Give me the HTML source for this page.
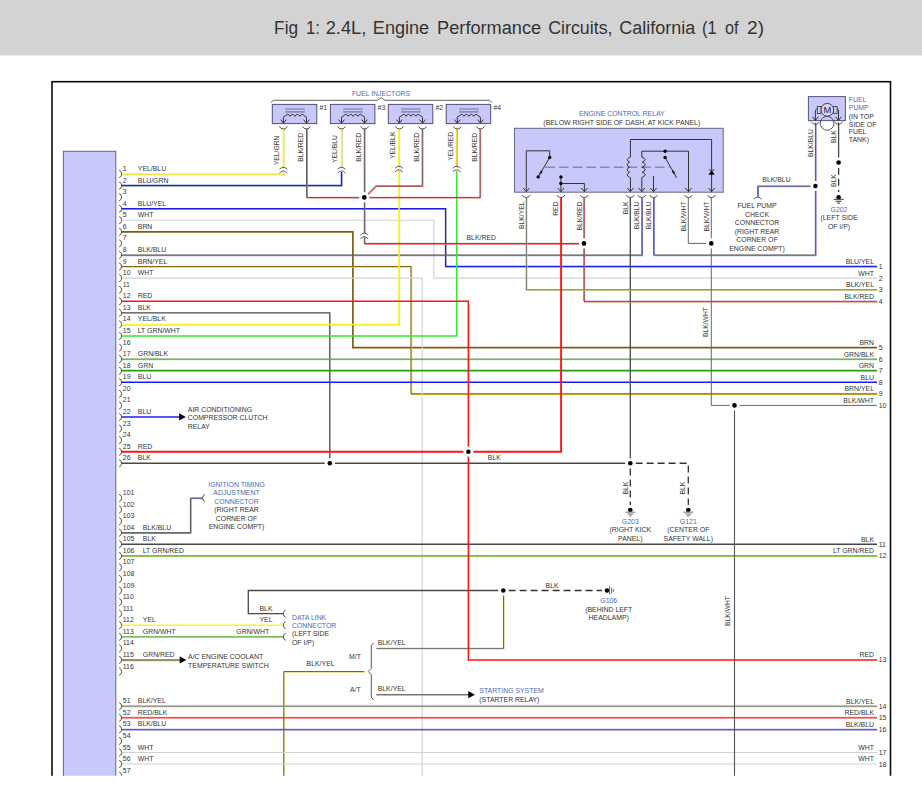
<!DOCTYPE html>
<html><head><meta charset="utf-8"><title>Fig 1</title>
<style>
html,body{margin:0;padding:0;background:#fff;}
body{width:922px;height:797px;overflow:hidden;font-family:"Liberation Sans",sans-serif;}
svg{display:block;}
svg text{font-family:"Liberation Sans",sans-serif;}
</style></head><body>
<svg width="922" height="797" viewBox="0 0 922 797">
<rect x="0" y="0" width="922" height="797" fill="#fff"/>
<rect x="0" y="0" width="922" height="55.4" fill="#d3d3d3"/>
<g font-size="19.2" fill="#333"><text x="274.1" y="33.9" textLength="24.0" lengthAdjust="spacingAndGlyphs">Fig</text><text x="306.0" y="33.9" textLength="14.0" lengthAdjust="spacingAndGlyphs">1:</text><text x="325.7" y="33.9" textLength="40.6" lengthAdjust="spacingAndGlyphs">2.4L,</text><text x="372.8" y="33.9" textLength="56.4" lengthAdjust="spacingAndGlyphs">Engine</text><text x="437.1" y="33.9" textLength="104.1" lengthAdjust="spacingAndGlyphs">Performance</text><text x="548.2" y="33.9" textLength="64.3" lengthAdjust="spacingAndGlyphs">Circuits,</text><text x="619.3" y="33.9" textLength="76.1" lengthAdjust="spacingAndGlyphs">California</text><text x="701.9" y="33.9" textLength="14.7" lengthAdjust="spacingAndGlyphs">(1</text><text x="725.0" y="33.9" textLength="13.6" lengthAdjust="spacingAndGlyphs">of</text><text x="747.0" y="33.9" textLength="17.0" lengthAdjust="spacingAndGlyphs">2)</text></g>
<g>
<polyline points="121.30,174.00 283.40,174.00 283.40,172.00" fill="none" stroke="#8a8ab0" stroke-width="0.90" stroke-opacity="0.70" transform="translate(0.70,0.70)"/>
<polyline points="121.30,174.00 283.40,174.00 283.40,172.00" fill="none" stroke="#faf526" stroke-width="1.40"/>
<polyline points="283.40,168.00 283.40,128.50" fill="none" stroke="#9c9" stroke-width="0.90" stroke-opacity="0.80" transform="translate(0.70,0.70)"/>
<polyline points="283.40,168.00 283.40,128.50" fill="none" stroke="#faf526" stroke-width="1.60"/>
<polyline points="121.30,185.57 341.50,185.57 341.50,172.00" fill="none" stroke="#9c6" stroke-width="0.90" stroke-opacity="0.70" transform="translate(0.70,0.70)"/>
<polyline points="121.30,185.57 341.50,185.57 341.50,172.00" fill="none" stroke="#1a1cf6" stroke-width="1.50"/>
<polyline points="341.50,168.00 341.50,128.50" fill="none" stroke="#99c" stroke-width="0.90" stroke-opacity="0.80" transform="translate(0.70,0.70)"/>
<polyline points="341.50,168.00 341.50,128.50" fill="none" stroke="#faf526" stroke-width="1.60"/>
<polyline points="121.30,208.71 445.60,208.71 445.60,266.56 877.00,266.56" fill="none" stroke="#e6dc6a" stroke-width="0.90" stroke-opacity="0.80" transform="translate(0.70,0.70)"/>
<polyline points="121.30,208.71 445.60,208.71 445.60,266.56 877.00,266.56" fill="none" stroke="#1a1cf6" stroke-width="1.40"/>
<polyline points="121.30,220.28 433.90,220.28 433.90,278.13 877.00,278.13" fill="none" stroke="#d2d2d2" stroke-width="1.10"/>
<polyline points="121.30,231.85 352.90,231.85 352.90,347.55 877.00,347.55" fill="none" stroke="#7d5e10" stroke-width="1.70"/>
<polyline points="121.30,254.99 641.80,254.99 641.80,197.50" fill="none" stroke="#7474ee" stroke-width="1.00" stroke-opacity="1.00" transform="translate(0.70,0.70)"/>
<polyline points="121.30,254.99 641.80,254.99 641.80,197.50" fill="none" stroke="#555" stroke-width="1.00"/>
<polyline points="121.30,266.56 411.00,266.56 411.00,393.83 877.00,393.83" fill="none" stroke="#eeda35" stroke-width="1.00" stroke-opacity="1.00" transform="translate(0.70,0.70)"/>
<polyline points="121.30,266.56 411.00,266.56 411.00,393.83 877.00,393.83" fill="none" stroke="#86660f" stroke-width="1.10"/>
<polyline points="121.30,278.13 422.20,278.13 422.20,780.00" fill="none" stroke="#d2d2d2" stroke-width="1.10"/>
<polyline points="121.30,312.84 329.80,312.84 329.80,463.25" fill="none" stroke="#484848" stroke-width="1.30"/>
<polyline points="121.30,324.41 398.90,324.41 398.90,171.00" fill="none" stroke="#aa9" stroke-width="0.90" stroke-opacity="0.60" transform="translate(0.70,0.70)"/>
<polyline points="121.30,324.41 398.90,324.41 398.90,171.00" fill="none" stroke="#faf526" stroke-width="1.50"/>
<polyline points="398.90,167.00 398.90,128.50" fill="none" stroke="#aa9" stroke-width="0.90" stroke-opacity="0.60" transform="translate(0.70,0.70)"/>
<polyline points="398.90,167.00 398.90,128.50" fill="none" stroke="#faf526" stroke-width="1.60"/>
<polyline points="121.30,335.98 456.70,335.98 456.70,171.00" fill="none" stroke="#30ea30" stroke-width="1.40"/>
<polyline points="456.70,167.00 456.70,128.50" fill="none" stroke="#f60" stroke-width="0.80" stroke-opacity="0.90" transform="translate(0.70,0.70)"/>
<polyline points="456.70,167.00 456.70,128.50" fill="none" stroke="#f6d42a" stroke-width="1.50"/>
<polyline points="121.30,359.12 877.00,359.12" fill="none" stroke="#8a8" stroke-width="0.90" stroke-opacity="0.50" transform="translate(0.70,0.70)"/>
<polyline points="121.30,359.12 877.00,359.12" fill="none" stroke="#4aaa34" stroke-width="1.30"/>
<polyline points="121.30,370.69 877.00,370.69" fill="none" stroke="#24a012" stroke-width="1.70"/>
<polyline points="121.30,382.26 877.00,382.26" fill="none" stroke="#1a1cf6" stroke-width="1.50"/>
<polyline points="121.30,416.97 180.00,416.97" fill="none" stroke="#1a1cf6" stroke-width="1.60"/>
<polyline points="121.30,463.25 630.30,463.25" fill="none" stroke="#484848" stroke-width="1.30"/>
<polyline points="630.30,197.50 630.30,463.25" fill="none" stroke="#484848" stroke-width="1.30"/>
<polyline points="635.60,463.25 688.30,463.25 688.30,506.00" fill="none" stroke="#333" stroke-width="1.30" stroke-dasharray="7 4"/>
<polyline points="630.30,468.55 630.30,506.00" fill="none" stroke="#333" stroke-width="1.30" stroke-dasharray="7 4"/>
<polyline points="121.30,532.67 190.40,532.67 190.40,497.96 202.30,497.96" fill="none" stroke="#7474ee" stroke-width="1.00" stroke-opacity="1.00" transform="translate(0.70,0.70)"/>
<polyline points="121.30,532.67 190.40,532.67 190.40,497.96 202.30,497.96" fill="none" stroke="#555" stroke-width="1.00"/>
<polyline points="121.30,544.24 877.00,544.24" fill="none" stroke="#484848" stroke-width="1.30"/>
<polyline points="121.30,555.81 877.00,555.81" fill="none" stroke="#e98a3a" stroke-width="0.80" stroke-opacity="0.90" transform="translate(0.70,0.70)"/>
<polyline points="121.30,555.81 877.00,555.81" fill="none" stroke="#3ee03e" stroke-width="1.40"/>
<polyline points="121.30,625.23 283.30,625.23" fill="none" stroke="#faf526" stroke-width="1.50"/>
<polyline points="121.30,636.80 283.30,636.80" fill="none" stroke="#44aa2a" stroke-width="1.30"/>
<polyline points="121.30,659.94 180.00,659.94" fill="none" stroke="#a55" stroke-width="0.80" stroke-opacity="1.00" transform="translate(0.70,0.70)"/>
<polyline points="121.30,659.94 180.00,659.94" fill="none" stroke="#5f8a2a" stroke-width="1.30"/>
<polyline points="283.30,613.66 248.30,613.66 248.30,590.52 503.30,590.52" fill="none" stroke="#484848" stroke-width="1.30"/>
<polyline points="508.60,590.52 603.00,590.52" fill="none" stroke="#333" stroke-width="1.30" stroke-dasharray="7 4"/>
<polyline points="503.50,590.52 503.50,648.37 376.20,648.37" fill="none" stroke="#d8d060" stroke-width="0.90" stroke-opacity="1.00" transform="translate(0.70,0.70)"/>
<polyline points="503.50,590.52 503.50,648.37 376.20,648.37" fill="none" stroke="#666" stroke-width="1.00"/>
<polyline points="364.30,671.51 283.70,671.51 283.70,780.00" fill="none" stroke="#d8d060" stroke-width="0.90" stroke-opacity="1.00" transform="translate(0.70,0.70)"/>
<polyline points="364.30,671.51 283.70,671.51 283.70,780.00" fill="none" stroke="#666" stroke-width="1.00"/>
<polyline points="376.20,694.70 469.00,694.70" fill="none" stroke="#d8d060" stroke-width="0.90" stroke-opacity="1.00" transform="translate(0.70,0.70)"/>
<polyline points="376.20,694.70 469.00,694.70" fill="none" stroke="#555" stroke-width="1.00"/>
<polyline points="121.30,706.22 877.00,706.22" fill="none" stroke="#dcd870" stroke-width="1.00" stroke-opacity="1.00" transform="translate(0.70,0.70)"/>
<polyline points="121.30,706.22 877.00,706.22" fill="none" stroke="#808072" stroke-width="1.20"/>
<polyline points="121.30,717.79 877.00,717.79" fill="none" stroke="#855" stroke-width="0.60" stroke-opacity="0.60" transform="translate(0.00,-0.60)"/>
<polyline points="121.30,717.79 877.00,717.79" fill="none" stroke="#ff1c1c" stroke-width="1.25"/>
<polyline points="121.30,729.36 877.00,729.36" fill="none" stroke="#7474ee" stroke-width="1.00" stroke-opacity="1.00" transform="translate(0.70,0.70)"/>
<polyline points="121.30,729.36 877.00,729.36" fill="none" stroke="#555" stroke-width="1.00"/>
<polyline points="121.30,752.50 877.00,752.50" fill="none" stroke="#d2d2d2" stroke-width="1.10"/>
<polyline points="121.30,764.07 877.00,764.07" fill="none" stroke="#d2d2d2" stroke-width="1.10"/>
<polyline points="306.60,128.50 306.60,197.40 364.30,197.40" fill="none" stroke="#ee6464" stroke-width="1.05" stroke-opacity="1.00" transform="translate(0.70,0.70)"/>
<polyline points="306.60,128.50 306.60,197.40 364.30,197.40" fill="none" stroke="#555" stroke-width="1.00"/>
<polyline points="364.30,128.50 364.30,233.00" fill="none" stroke="#ee6464" stroke-width="1.05" stroke-opacity="1.00" transform="translate(0.70,0.70)"/>
<polyline points="364.30,128.50 364.30,233.00" fill="none" stroke="#555" stroke-width="1.00"/>
<polyline points="364.30,237.00 364.30,243.42 584.00,243.42" fill="none" stroke="#ee6464" stroke-width="1.05" stroke-opacity="1.00" transform="translate(0.70,0.70)"/>
<polyline points="364.30,237.00 364.30,243.42 584.00,243.42" fill="none" stroke="#555" stroke-width="1.00"/>
<polyline points="422.20,128.50 422.20,185.90 375.60,185.90 364.30,197.40" fill="none" stroke="#ee6464" stroke-width="1.05" stroke-opacity="1.00" transform="translate(0.70,0.70)"/>
<polyline points="422.20,128.50 422.20,185.90 375.60,185.90 364.30,197.40" fill="none" stroke="#555" stroke-width="1.00"/>
<polyline points="480.00,128.50 480.00,197.40 364.30,197.40" fill="none" stroke="#ee6464" stroke-width="1.05" stroke-opacity="1.00" transform="translate(0.70,0.70)"/>
<polyline points="480.00,128.50 480.00,197.40 364.30,197.40" fill="none" stroke="#555" stroke-width="1.00"/>
<polyline points="583.90,197.50 583.90,301.27 877.00,301.27" fill="none" stroke="#ee6464" stroke-width="1.05" stroke-opacity="1.00" transform="translate(0.70,0.70)"/>
<polyline points="583.90,197.50 583.90,301.27 877.00,301.27" fill="none" stroke="#555" stroke-width="1.00"/>
<polyline points="526.30,197.50 526.30,289.70 877.00,289.70" fill="none" stroke="#dcd868" stroke-width="0.90" stroke-opacity="1.00" transform="translate(0.70,0.70)"/>
<polyline points="526.30,197.50 526.30,289.70 877.00,289.70" fill="none" stroke="#74746a" stroke-width="1.10"/>
<polyline points="688.30,197.50 688.30,243.42 711.30,243.42" fill="none" stroke="#666" stroke-width="1.00"/>
<polyline points="711.30,197.50 711.30,405.40 877.00,405.40" fill="none" stroke="#666" stroke-width="1.00"/>
<polyline points="734.50,405.40 734.50,780.00" fill="none" stroke="#555" stroke-width="1.10"/>
<polyline points="653.60,197.50 653.60,254.99 815.40,254.99 815.40,122.60" fill="none" stroke="#7474ee" stroke-width="1.00" stroke-opacity="1.00" transform="translate(0.70,0.70)"/>
<polyline points="653.60,197.50 653.60,254.99 815.40,254.99 815.40,122.60" fill="none" stroke="#555" stroke-width="1.00"/>
<polyline points="815.40,186.00 757.70,186.00 757.70,196.60" fill="none" stroke="#7474ee" stroke-width="1.00" stroke-opacity="1.00" transform="translate(0.70,0.70)"/>
<polyline points="815.40,186.00 757.70,186.00 757.70,196.60" fill="none" stroke="#555" stroke-width="1.00"/>
<polyline points="838.60,122.60 838.60,162.50" fill="none" stroke="#484848" stroke-width="1.30"/>
<polyline points="838.60,167.80 838.60,193.00" fill="none" stroke="#333" stroke-width="1.30" stroke-dasharray="7 4"/>
<polyline points="121.30,301.27 468.40,301.27 468.40,659.94 877.00,659.94" fill="none" stroke="#ff1414" stroke-width="1.60"/>
<polyline points="121.30,451.68 561.10,451.68 561.10,197.50" fill="none" stroke="#ff1414" stroke-width="1.90"/>
<circle cx="364.30" cy="197.40" r="5.10" fill="#fff"/>
<circle cx="364.30" cy="197.40" r="2.30" fill="#000"/>
<circle cx="584.00" cy="243.42" r="5.10" fill="#fff"/>
<circle cx="584.00" cy="243.42" r="2.30" fill="#000"/>
<circle cx="711.30" cy="243.42" r="5.10" fill="#fff"/>
<circle cx="711.30" cy="243.42" r="2.30" fill="#000"/>
<circle cx="734.50" cy="405.40" r="5.10" fill="#fff"/>
<circle cx="734.50" cy="405.40" r="2.30" fill="#000"/>
<circle cx="815.40" cy="186.00" r="5.10" fill="#fff"/>
<circle cx="815.40" cy="186.00" r="2.30" fill="#000"/>
<circle cx="838.60" cy="162.50" r="5.10" fill="#fff"/>
<circle cx="838.60" cy="162.50" r="2.30" fill="#000"/>
<circle cx="838.60" cy="197.20" r="5.10" fill="#fff"/>
<circle cx="838.60" cy="197.20" r="2.30" fill="#000"/>
<circle cx="329.80" cy="463.25" r="5.10" fill="#fff"/>
<circle cx="329.80" cy="463.25" r="2.30" fill="#000"/>
<circle cx="468.40" cy="451.68" r="5.10" fill="#fff"/>
<circle cx="468.40" cy="451.68" r="2.30" fill="#000"/>
<circle cx="630.30" cy="463.25" r="5.10" fill="#fff"/>
<circle cx="630.30" cy="463.25" r="2.30" fill="#000"/>
<circle cx="630.30" cy="510.00" r="5.10" fill="#fff"/>
<circle cx="630.30" cy="510.00" r="2.30" fill="#000"/>
<circle cx="688.30" cy="510.00" r="5.10" fill="#fff"/>
<circle cx="688.30" cy="510.00" r="2.30" fill="#000"/>
<circle cx="503.30" cy="590.52" r="5.10" fill="#fff"/>
<circle cx="503.30" cy="590.52" r="2.30" fill="#000"/>
<circle cx="607.00" cy="590.52" r="5.10" fill="#fff"/>
<circle cx="607.00" cy="590.52" r="2.30" fill="#000"/>
<polygon points="185.80,416.97 179.20,413.37 179.20,420.57" fill="#000"/>
<polygon points="186.30,659.94 179.70,656.34 179.70,663.54" fill="#000"/>
<polygon points="474.90,694.70 468.30,691.10 468.30,698.30" fill="#000"/>
<line x1="833.60" y1="199.40" x2="843.60" y2="199.40" stroke="#5a5a5a" stroke-width="1.25"/>
<line x1="835.70" y1="201.30" x2="841.50" y2="201.30" stroke="#5a5a5a" stroke-width="1.25"/>
<line x1="837.20" y1="203.10" x2="840.00" y2="203.10" stroke="#5a5a5a" stroke-width="1.25"/>
<line x1="625.30" y1="512.20" x2="635.30" y2="512.20" stroke="#8c8c8c" stroke-width="1.25"/>
<line x1="627.40" y1="514.10" x2="633.20" y2="514.10" stroke="#8c8c8c" stroke-width="1.25"/>
<line x1="628.90" y1="515.90" x2="631.70" y2="515.90" stroke="#8c8c8c" stroke-width="1.25"/>
<line x1="683.30" y1="512.20" x2="693.30" y2="512.20" stroke="#8c8c8c" stroke-width="1.25"/>
<line x1="685.40" y1="514.10" x2="691.20" y2="514.10" stroke="#8c8c8c" stroke-width="1.25"/>
<line x1="686.90" y1="515.90" x2="689.70" y2="515.90" stroke="#8c8c8c" stroke-width="1.25"/>
<line x1="609.60" y1="586.32" x2="609.60" y2="594.72" stroke="#666" stroke-width="1"/>
<line x1="611.60" y1="587.72" x2="611.60" y2="593.32" stroke="#666" stroke-width="1"/>
<line x1="613.40" y1="589.22" x2="613.40" y2="591.82" stroke="#666" stroke-width="1"/>
<rect x="63.4" y="151.3" width="52.4" height="640" fill="#c8c8fa" stroke="#666680" stroke-width="1"/>
<path d="M119.1,170.30 A3.95,3.95 0 0 1 119.1,177.70" fill="none" stroke="#444" stroke-width="0.9"/>
<text x="122.80" y="171.00" text-anchor="start" fill="#333" font-size="6.9">1</text>
<text x="137.80" y="171.00" text-anchor="start" fill="#333" font-size="6.9">YEL/BLU</text>
<path d="M119.1,181.87 A3.95,3.95 0 0 1 119.1,189.27" fill="none" stroke="#444" stroke-width="0.9"/>
<text x="122.80" y="182.57" text-anchor="start" fill="#333" font-size="6.9">2</text>
<text x="137.80" y="182.57" text-anchor="start" fill="#333" font-size="6.9">BLU/GRN</text>
<path d="M119.1,193.44 A3.95,3.95 0 0 1 119.1,200.84" fill="none" stroke="#444" stroke-width="0.9"/>
<text x="122.80" y="194.14" text-anchor="start" fill="#333" font-size="6.9">3</text>
<path d="M119.1,205.01 A3.95,3.95 0 0 1 119.1,212.41" fill="none" stroke="#444" stroke-width="0.9"/>
<text x="122.80" y="205.71" text-anchor="start" fill="#333" font-size="6.9">4</text>
<text x="137.80" y="205.71" text-anchor="start" fill="#333" font-size="6.9">BLU/YEL</text>
<path d="M119.1,216.58 A3.95,3.95 0 0 1 119.1,223.98" fill="none" stroke="#444" stroke-width="0.9"/>
<text x="122.80" y="217.28" text-anchor="start" fill="#333" font-size="6.9">5</text>
<text x="137.80" y="217.28" text-anchor="start" fill="#333" font-size="6.9">WHT</text>
<path d="M119.1,228.15 A3.95,3.95 0 0 1 119.1,235.55" fill="none" stroke="#444" stroke-width="0.9"/>
<text x="122.80" y="228.85" text-anchor="start" fill="#333" font-size="6.9">6</text>
<text x="137.80" y="228.85" text-anchor="start" fill="#333" font-size="6.9">BRN</text>
<path d="M119.1,239.72 A3.95,3.95 0 0 1 119.1,247.12" fill="none" stroke="#444" stroke-width="0.9"/>
<text x="122.80" y="240.42" text-anchor="start" fill="#333" font-size="6.9">7</text>
<path d="M119.1,251.29 A3.95,3.95 0 0 1 119.1,258.69" fill="none" stroke="#444" stroke-width="0.9"/>
<text x="122.80" y="251.99" text-anchor="start" fill="#333" font-size="6.9">8</text>
<text x="137.80" y="251.99" text-anchor="start" fill="#333" font-size="6.9">BLK/BLU</text>
<path d="M119.1,262.86 A3.95,3.95 0 0 1 119.1,270.26" fill="none" stroke="#444" stroke-width="0.9"/>
<text x="122.80" y="263.56" text-anchor="start" fill="#333" font-size="6.9">9</text>
<text x="137.80" y="263.56" text-anchor="start" fill="#333" font-size="6.9">BRN/YEL</text>
<path d="M119.1,274.43 A3.95,3.95 0 0 1 119.1,281.83" fill="none" stroke="#444" stroke-width="0.9"/>
<text x="122.80" y="275.13" text-anchor="start" fill="#333" font-size="6.9">10</text>
<text x="137.80" y="275.13" text-anchor="start" fill="#333" font-size="6.9">WHT</text>
<path d="M119.1,286.00 A3.95,3.95 0 0 1 119.1,293.40" fill="none" stroke="#444" stroke-width="0.9"/>
<text x="122.80" y="286.70" text-anchor="start" fill="#333" font-size="6.9">11</text>
<path d="M119.1,297.57 A3.95,3.95 0 0 1 119.1,304.97" fill="none" stroke="#444" stroke-width="0.9"/>
<text x="122.80" y="298.27" text-anchor="start" fill="#333" font-size="6.9">12</text>
<text x="137.80" y="298.27" text-anchor="start" fill="#333" font-size="6.9">RED</text>
<path d="M119.1,309.14 A3.95,3.95 0 0 1 119.1,316.54" fill="none" stroke="#444" stroke-width="0.9"/>
<text x="122.80" y="309.84" text-anchor="start" fill="#333" font-size="6.9">13</text>
<text x="137.80" y="309.84" text-anchor="start" fill="#333" font-size="6.9">BLK</text>
<path d="M119.1,320.71 A3.95,3.95 0 0 1 119.1,328.11" fill="none" stroke="#444" stroke-width="0.9"/>
<text x="122.80" y="321.41" text-anchor="start" fill="#333" font-size="6.9">14</text>
<text x="137.80" y="321.41" text-anchor="start" fill="#333" font-size="6.9">YEL/BLK</text>
<path d="M119.1,332.28 A3.95,3.95 0 0 1 119.1,339.68" fill="none" stroke="#444" stroke-width="0.9"/>
<text x="122.80" y="332.98" text-anchor="start" fill="#333" font-size="6.9">15</text>
<text x="137.80" y="332.98" text-anchor="start" fill="#333" font-size="6.9">LT GRN/WHT</text>
<path d="M119.1,343.85 A3.95,3.95 0 0 1 119.1,351.25" fill="none" stroke="#444" stroke-width="0.9"/>
<text x="122.80" y="344.55" text-anchor="start" fill="#333" font-size="6.9">16</text>
<path d="M119.1,355.42 A3.95,3.95 0 0 1 119.1,362.82" fill="none" stroke="#444" stroke-width="0.9"/>
<text x="122.80" y="356.12" text-anchor="start" fill="#333" font-size="6.9">17</text>
<text x="137.80" y="356.12" text-anchor="start" fill="#333" font-size="6.9">GRN/BLK</text>
<path d="M119.1,366.99 A3.95,3.95 0 0 1 119.1,374.39" fill="none" stroke="#444" stroke-width="0.9"/>
<text x="122.80" y="367.69" text-anchor="start" fill="#333" font-size="6.9">18</text>
<text x="137.80" y="367.69" text-anchor="start" fill="#333" font-size="6.9">GRN</text>
<path d="M119.1,378.56 A3.95,3.95 0 0 1 119.1,385.96" fill="none" stroke="#444" stroke-width="0.9"/>
<text x="122.80" y="379.26" text-anchor="start" fill="#333" font-size="6.9">19</text>
<text x="137.80" y="379.26" text-anchor="start" fill="#333" font-size="6.9">BLU</text>
<path d="M119.1,390.13 A3.95,3.95 0 0 1 119.1,397.53" fill="none" stroke="#444" stroke-width="0.9"/>
<text x="122.80" y="390.83" text-anchor="start" fill="#333" font-size="6.9">20</text>
<path d="M119.1,401.70 A3.95,3.95 0 0 1 119.1,409.10" fill="none" stroke="#444" stroke-width="0.9"/>
<text x="122.80" y="402.40" text-anchor="start" fill="#333" font-size="6.9">21</text>
<path d="M119.1,413.27 A3.95,3.95 0 0 1 119.1,420.67" fill="none" stroke="#444" stroke-width="0.9"/>
<text x="122.80" y="413.97" text-anchor="start" fill="#333" font-size="6.9">22</text>
<text x="137.80" y="413.97" text-anchor="start" fill="#333" font-size="6.9">BLU</text>
<path d="M119.1,424.84 A3.95,3.95 0 0 1 119.1,432.24" fill="none" stroke="#444" stroke-width="0.9"/>
<text x="122.80" y="425.54" text-anchor="start" fill="#333" font-size="6.9">23</text>
<path d="M119.1,436.41 A3.95,3.95 0 0 1 119.1,443.81" fill="none" stroke="#444" stroke-width="0.9"/>
<text x="122.80" y="437.11" text-anchor="start" fill="#333" font-size="6.9">24</text>
<path d="M119.1,447.98 A3.95,3.95 0 0 1 119.1,455.38" fill="none" stroke="#444" stroke-width="0.9"/>
<text x="122.80" y="448.68" text-anchor="start" fill="#333" font-size="6.9">25</text>
<text x="137.80" y="448.68" text-anchor="start" fill="#333" font-size="6.9">RED</text>
<path d="M119.1,459.55 A3.95,3.95 0 0 1 119.1,466.95" fill="none" stroke="#444" stroke-width="0.9"/>
<text x="122.80" y="460.25" text-anchor="start" fill="#333" font-size="6.9">26</text>
<text x="137.80" y="460.25" text-anchor="start" fill="#333" font-size="6.9">BLK</text>
<path d="M119.1,494.26 A3.95,3.95 0 0 1 119.1,501.66" fill="none" stroke="#444" stroke-width="0.9"/>
<text x="122.80" y="494.96" text-anchor="start" fill="#333" font-size="6.9">101</text>
<path d="M119.1,505.83 A3.95,3.95 0 0 1 119.1,513.23" fill="none" stroke="#444" stroke-width="0.9"/>
<text x="122.80" y="506.53" text-anchor="start" fill="#333" font-size="6.9">102</text>
<path d="M119.1,517.40 A3.95,3.95 0 0 1 119.1,524.80" fill="none" stroke="#444" stroke-width="0.9"/>
<text x="122.80" y="518.10" text-anchor="start" fill="#333" font-size="6.9">103</text>
<path d="M119.1,528.97 A3.95,3.95 0 0 1 119.1,536.37" fill="none" stroke="#444" stroke-width="0.9"/>
<text x="122.80" y="529.67" text-anchor="start" fill="#333" font-size="6.9">104</text>
<text x="142.80" y="529.67" text-anchor="start" fill="#333" font-size="6.9">BLK/BLU</text>
<path d="M119.1,540.54 A3.95,3.95 0 0 1 119.1,547.94" fill="none" stroke="#444" stroke-width="0.9"/>
<text x="122.80" y="541.24" text-anchor="start" fill="#333" font-size="6.9">105</text>
<text x="142.80" y="541.24" text-anchor="start" fill="#333" font-size="6.9">BLK</text>
<path d="M119.1,552.11 A3.95,3.95 0 0 1 119.1,559.51" fill="none" stroke="#444" stroke-width="0.9"/>
<text x="122.80" y="552.81" text-anchor="start" fill="#333" font-size="6.9">106</text>
<text x="142.80" y="552.81" text-anchor="start" fill="#333" font-size="6.9">LT GRN/RED</text>
<path d="M119.1,563.68 A3.95,3.95 0 0 1 119.1,571.08" fill="none" stroke="#444" stroke-width="0.9"/>
<text x="122.80" y="564.38" text-anchor="start" fill="#333" font-size="6.9">107</text>
<path d="M119.1,575.25 A3.95,3.95 0 0 1 119.1,582.65" fill="none" stroke="#444" stroke-width="0.9"/>
<text x="122.80" y="575.95" text-anchor="start" fill="#333" font-size="6.9">108</text>
<path d="M119.1,586.82 A3.95,3.95 0 0 1 119.1,594.22" fill="none" stroke="#444" stroke-width="0.9"/>
<text x="122.80" y="587.52" text-anchor="start" fill="#333" font-size="6.9">109</text>
<path d="M119.1,598.39 A3.95,3.95 0 0 1 119.1,605.79" fill="none" stroke="#444" stroke-width="0.9"/>
<text x="122.80" y="599.09" text-anchor="start" fill="#333" font-size="6.9">110</text>
<path d="M119.1,609.96 A3.95,3.95 0 0 1 119.1,617.36" fill="none" stroke="#444" stroke-width="0.9"/>
<text x="122.80" y="610.66" text-anchor="start" fill="#333" font-size="6.9">111</text>
<path d="M119.1,621.53 A3.95,3.95 0 0 1 119.1,628.93" fill="none" stroke="#444" stroke-width="0.9"/>
<text x="122.80" y="622.23" text-anchor="start" fill="#333" font-size="6.9">112</text>
<text x="142.80" y="622.23" text-anchor="start" fill="#333" font-size="6.9">YEL</text>
<path d="M119.1,633.10 A3.95,3.95 0 0 1 119.1,640.50" fill="none" stroke="#444" stroke-width="0.9"/>
<text x="122.80" y="633.80" text-anchor="start" fill="#333" font-size="6.9">113</text>
<text x="142.80" y="633.80" text-anchor="start" fill="#333" font-size="6.9">GRN/WHT</text>
<path d="M119.1,644.67 A3.95,3.95 0 0 1 119.1,652.07" fill="none" stroke="#444" stroke-width="0.9"/>
<text x="122.80" y="645.37" text-anchor="start" fill="#333" font-size="6.9">114</text>
<path d="M119.1,656.24 A3.95,3.95 0 0 1 119.1,663.64" fill="none" stroke="#444" stroke-width="0.9"/>
<text x="122.80" y="656.94" text-anchor="start" fill="#333" font-size="6.9">115</text>
<text x="142.80" y="656.94" text-anchor="start" fill="#333" font-size="6.9">GRN/RED</text>
<path d="M119.1,667.81 A3.95,3.95 0 0 1 119.1,675.21" fill="none" stroke="#444" stroke-width="0.9"/>
<text x="122.80" y="668.51" text-anchor="start" fill="#333" font-size="6.9">116</text>
<path d="M119.1,702.52 A3.95,3.95 0 0 1 119.1,709.92" fill="none" stroke="#444" stroke-width="0.9"/>
<text x="122.80" y="703.22" text-anchor="start" fill="#333" font-size="6.9">51</text>
<text x="137.80" y="703.22" text-anchor="start" fill="#333" font-size="6.9">BLK/YEL</text>
<path d="M119.1,714.09 A3.95,3.95 0 0 1 119.1,721.49" fill="none" stroke="#444" stroke-width="0.9"/>
<text x="122.80" y="714.79" text-anchor="start" fill="#333" font-size="6.9">52</text>
<text x="137.80" y="714.79" text-anchor="start" fill="#333" font-size="6.9">RED/BLK</text>
<path d="M119.1,725.66 A3.95,3.95 0 0 1 119.1,733.06" fill="none" stroke="#444" stroke-width="0.9"/>
<text x="122.80" y="726.36" text-anchor="start" fill="#333" font-size="6.9">53</text>
<text x="137.80" y="726.36" text-anchor="start" fill="#333" font-size="6.9">BLK/BLU</text>
<path d="M119.1,737.23 A3.95,3.95 0 0 1 119.1,744.63" fill="none" stroke="#444" stroke-width="0.9"/>
<text x="122.80" y="737.93" text-anchor="start" fill="#333" font-size="6.9">54</text>
<path d="M119.1,748.80 A3.95,3.95 0 0 1 119.1,756.20" fill="none" stroke="#444" stroke-width="0.9"/>
<text x="122.80" y="749.50" text-anchor="start" fill="#333" font-size="6.9">55</text>
<text x="137.80" y="749.50" text-anchor="start" fill="#333" font-size="6.9">WHT</text>
<path d="M119.1,760.37 A3.95,3.95 0 0 1 119.1,767.77" fill="none" stroke="#444" stroke-width="0.9"/>
<text x="122.80" y="761.07" text-anchor="start" fill="#333" font-size="6.9">56</text>
<text x="137.80" y="761.07" text-anchor="start" fill="#333" font-size="6.9">WHT</text>
<path d="M119.1,771.94 A3.95,3.95 0 0 1 119.1,779.34" fill="none" stroke="#444" stroke-width="0.9"/>
<text x="122.80" y="772.64" text-anchor="start" fill="#333" font-size="6.9">57</text>
<text x="874.00" y="263.96" text-anchor="end" fill="#333" font-size="6.9">BLU/YEL</text>
<text x="878.70" y="269.06" text-anchor="start" fill="#333" font-size="6.9">1</text>
<text x="874.00" y="275.53" text-anchor="end" fill="#333" font-size="6.9">WHT</text>
<text x="878.70" y="280.63" text-anchor="start" fill="#333" font-size="6.9">2</text>
<text x="874.00" y="287.10" text-anchor="end" fill="#333" font-size="6.9">BLK/YEL</text>
<text x="878.70" y="292.20" text-anchor="start" fill="#333" font-size="6.9">3</text>
<text x="874.00" y="298.67" text-anchor="end" fill="#333" font-size="6.9">BLK/RED</text>
<text x="878.70" y="303.77" text-anchor="start" fill="#333" font-size="6.9">4</text>
<text x="874.00" y="344.95" text-anchor="end" fill="#333" font-size="6.9">BRN</text>
<text x="878.70" y="350.05" text-anchor="start" fill="#333" font-size="6.9">5</text>
<text x="874.00" y="356.52" text-anchor="end" fill="#333" font-size="6.9">GRN/BLK</text>
<text x="878.70" y="361.62" text-anchor="start" fill="#333" font-size="6.9">6</text>
<text x="874.00" y="368.09" text-anchor="end" fill="#333" font-size="6.9">GRN</text>
<text x="878.70" y="373.19" text-anchor="start" fill="#333" font-size="6.9">7</text>
<text x="874.00" y="379.66" text-anchor="end" fill="#333" font-size="6.9">BLU</text>
<text x="878.70" y="384.76" text-anchor="start" fill="#333" font-size="6.9">8</text>
<text x="874.00" y="391.23" text-anchor="end" fill="#333" font-size="6.9">BRN/YEL</text>
<text x="878.70" y="396.33" text-anchor="start" fill="#333" font-size="6.9">9</text>
<text x="874.00" y="402.80" text-anchor="end" fill="#333" font-size="6.9">BLK/WHT</text>
<text x="878.70" y="407.90" text-anchor="start" fill="#333" font-size="6.9">10</text>
<text x="874.00" y="541.64" text-anchor="end" fill="#333" font-size="6.9">BLK</text>
<text x="878.70" y="546.74" text-anchor="start" fill="#333" font-size="6.9">11</text>
<text x="874.00" y="553.21" text-anchor="end" fill="#333" font-size="6.9">LT GRN/RED</text>
<text x="878.70" y="558.31" text-anchor="start" fill="#333" font-size="6.9">12</text>
<text x="874.00" y="657.34" text-anchor="end" fill="#333" font-size="6.9">RED</text>
<text x="878.70" y="662.44" text-anchor="start" fill="#333" font-size="6.9">13</text>
<text x="874.00" y="703.62" text-anchor="end" fill="#333" font-size="6.9">BLK/YEL</text>
<text x="878.70" y="708.72" text-anchor="start" fill="#333" font-size="6.9">14</text>
<text x="874.00" y="715.19" text-anchor="end" fill="#333" font-size="6.9">RED/BLK</text>
<text x="878.70" y="720.29" text-anchor="start" fill="#333" font-size="6.9">15</text>
<text x="874.00" y="726.76" text-anchor="end" fill="#333" font-size="6.9">BLK/BLU</text>
<text x="878.70" y="731.86" text-anchor="start" fill="#333" font-size="6.9">16</text>
<text x="874.00" y="749.90" text-anchor="end" fill="#333" font-size="6.9">WHT</text>
<text x="878.70" y="755.00" text-anchor="start" fill="#333" font-size="6.9">17</text>
<text x="874.00" y="761.47" text-anchor="end" fill="#333" font-size="6.9">WHT</text>
<text x="878.70" y="766.57" text-anchor="start" fill="#333" font-size="6.9">18</text>
<text x="381.00" y="96.00" text-anchor="middle" fill="#4a6cb8" font-size="6.9">FUEL INJECTORS</text>
<path d="M270.8,102.7 L273.4,100.3 L377.5,100.3 L381.3,97.6 L385,100.3 L489.6,100.3 L492.2,102.7" fill="none" stroke="#555" stroke-width="0.9"/>
<rect x="272.30" y="104.4" width="44.5" height="19.2" fill="#c8c8fa" stroke="#505070" stroke-width="1"/>
<line x1="285.10" y1="109" x2="304.80" y2="109" stroke="#585880" stroke-width="0.8"/>
<line x1="285.10" y1="111.9" x2="304.80" y2="111.9" stroke="#8080b0" stroke-width="1.4"/>
<path d="M283.40,122.6 L283.40,117.6 Q283.40,116.1 285.20,116.3 Q287.64,112.3 290.08,116.3 Q292.51,112.3 294.95,116.3 Q297.39,112.3 299.83,116.3 Q302.26,112.3 304.70,116.3 Q306.50,116.1 306.50,117.6 L306.50,122.6" fill="none" stroke="#222" stroke-width="0.9"/>
<path d="M280.50,119.6 L283.40,123.2 L286.30,119.6" fill="none" stroke="#222" stroke-width="0.9"/>
<path d="M279.40,126.40 A4.4,4.4 0 0 0 287.40,126.40" fill="none" stroke="#444" stroke-width="0.9"/>
<path d="M303.60,119.6 L306.50,123.2 L309.40,119.6" fill="none" stroke="#222" stroke-width="0.9"/>
<path d="M302.50,126.40 A4.4,4.4 0 0 0 310.50,126.40" fill="none" stroke="#444" stroke-width="0.9"/>
<text x="319.50" y="109.90" text-anchor="start" fill="#333" font-size="6.9">#1</text>
<text x="278.90" y="150.40" text-anchor="middle" fill="#333" font-size="6.75" transform="rotate(-90 278.90 150.40)">YEL/GRN</text>
<text x="303.10" y="147.40" text-anchor="middle" fill="#333" font-size="6.75" transform="rotate(-90 303.10 147.40)">BLK/RED</text>
<rect x="330.40" y="104.4" width="44.5" height="19.2" fill="#c8c8fa" stroke="#505070" stroke-width="1"/>
<line x1="343.20" y1="109" x2="362.90" y2="109" stroke="#585880" stroke-width="0.8"/>
<line x1="343.20" y1="111.9" x2="362.90" y2="111.9" stroke="#8080b0" stroke-width="1.4"/>
<path d="M341.50,122.6 L341.50,117.6 Q341.50,116.1 343.30,116.3 Q345.74,112.3 348.18,116.3 Q350.61,112.3 353.05,116.3 Q355.49,112.3 357.93,116.3 Q360.36,112.3 362.80,116.3 Q364.60,116.1 364.60,117.6 L364.60,122.6" fill="none" stroke="#222" stroke-width="0.9"/>
<path d="M338.60,119.6 L341.50,123.2 L344.40,119.6" fill="none" stroke="#222" stroke-width="0.9"/>
<path d="M337.50,126.40 A4.4,4.4 0 0 0 345.50,126.40" fill="none" stroke="#444" stroke-width="0.9"/>
<path d="M361.70,119.6 L364.60,123.2 L367.50,119.6" fill="none" stroke="#222" stroke-width="0.9"/>
<path d="M360.60,126.40 A4.4,4.4 0 0 0 368.60,126.40" fill="none" stroke="#444" stroke-width="0.9"/>
<text x="377.60" y="109.90" text-anchor="start" fill="#333" font-size="6.9">#3</text>
<text x="337.00" y="149.10" text-anchor="middle" fill="#333" font-size="6.75" transform="rotate(-90 337.00 149.10)">YEL/BLU</text>
<text x="361.20" y="147.40" text-anchor="middle" fill="#333" font-size="6.75" transform="rotate(-90 361.20 147.40)">BLK/RED</text>
<rect x="388.30" y="104.4" width="44.5" height="19.2" fill="#c8c8fa" stroke="#505070" stroke-width="1"/>
<line x1="401.10" y1="109" x2="420.80" y2="109" stroke="#585880" stroke-width="0.8"/>
<line x1="401.10" y1="111.9" x2="420.80" y2="111.9" stroke="#8080b0" stroke-width="1.4"/>
<path d="M399.40,122.6 L399.40,117.6 Q399.40,116.1 401.20,116.3 Q403.64,112.3 406.08,116.3 Q408.51,112.3 410.95,116.3 Q413.39,112.3 415.83,116.3 Q418.26,112.3 420.70,116.3 Q422.50,116.1 422.50,117.6 L422.50,122.6" fill="none" stroke="#222" stroke-width="0.9"/>
<path d="M396.50,119.6 L399.40,123.2 L402.30,119.6" fill="none" stroke="#222" stroke-width="0.9"/>
<path d="M395.40,126.40 A4.4,4.4 0 0 0 403.40,126.40" fill="none" stroke="#444" stroke-width="0.9"/>
<path d="M419.60,119.6 L422.50,123.2 L425.40,119.6" fill="none" stroke="#222" stroke-width="0.9"/>
<path d="M418.50,126.40 A4.4,4.4 0 0 0 426.50,126.40" fill="none" stroke="#444" stroke-width="0.9"/>
<text x="435.50" y="109.90" text-anchor="start" fill="#333" font-size="6.9">#2</text>
<text x="394.90" y="145.30" text-anchor="middle" fill="#333" font-size="6.75" transform="rotate(-90 394.90 145.30)">YEL/BLK</text>
<text x="419.10" y="147.40" text-anchor="middle" fill="#333" font-size="6.75" transform="rotate(-90 419.10 147.40)">BLK/RED</text>
<rect x="446.20" y="104.4" width="44.5" height="19.2" fill="#c8c8fa" stroke="#505070" stroke-width="1"/>
<line x1="459.00" y1="109" x2="478.70" y2="109" stroke="#585880" stroke-width="0.8"/>
<line x1="459.00" y1="111.9" x2="478.70" y2="111.9" stroke="#8080b0" stroke-width="1.4"/>
<path d="M457.30,122.6 L457.30,117.6 Q457.30,116.1 459.10,116.3 Q461.54,112.3 463.98,116.3 Q466.41,112.3 468.85,116.3 Q471.29,112.3 473.73,116.3 Q476.16,112.3 478.60,116.3 Q480.40,116.1 480.40,117.6 L480.40,122.6" fill="none" stroke="#222" stroke-width="0.9"/>
<path d="M454.40,119.6 L457.30,123.2 L460.20,119.6" fill="none" stroke="#222" stroke-width="0.9"/>
<path d="M453.30,126.40 A4.4,4.4 0 0 0 461.30,126.40" fill="none" stroke="#444" stroke-width="0.9"/>
<path d="M477.50,119.6 L480.40,123.2 L483.30,119.6" fill="none" stroke="#222" stroke-width="0.9"/>
<path d="M476.40,126.40 A4.4,4.4 0 0 0 484.40,126.40" fill="none" stroke="#444" stroke-width="0.9"/>
<text x="493.40" y="109.90" text-anchor="start" fill="#333" font-size="6.9">#4</text>
<text x="452.80" y="146.20" text-anchor="middle" fill="#333" font-size="6.75" transform="rotate(-90 452.80 146.20)">YEL/RED</text>
<text x="477.00" y="147.40" text-anchor="middle" fill="#333" font-size="6.75" transform="rotate(-90 477.00 147.40)">BLK/RED</text>
<path d="M279.50,169.40 Q283.40,165.20 287.30,169.40" fill="none" stroke="#444" stroke-width="0.9"/>
<path d="M279.50,173.00 Q283.40,168.80 287.30,173.00" fill="none" stroke="#444" stroke-width="0.9"/>
<path d="M337.60,169.40 Q341.50,165.20 345.40,169.40" fill="none" stroke="#444" stroke-width="0.9"/>
<path d="M337.60,173.00 Q341.50,168.80 345.40,173.00" fill="none" stroke="#444" stroke-width="0.9"/>
<path d="M395.00,168.30 Q398.90,164.10 402.80,168.30" fill="none" stroke="#444" stroke-width="0.9"/>
<path d="M395.00,171.90 Q398.90,167.70 402.80,171.90" fill="none" stroke="#444" stroke-width="0.9"/>
<path d="M452.80,168.30 Q456.70,164.10 460.60,168.30" fill="none" stroke="#444" stroke-width="0.9"/>
<path d="M452.80,171.90 Q456.70,167.70 460.60,171.90" fill="none" stroke="#444" stroke-width="0.9"/>
<path d="M360.40,235.20 Q364.30,231.00 368.20,235.20" fill="none" stroke="#444" stroke-width="0.9"/>
<path d="M360.40,238.80 Q364.30,234.60 368.20,238.80" fill="none" stroke="#444" stroke-width="0.9"/>
<text x="466.50" y="240.30" text-anchor="start" fill="#333" font-size="6.9">BLK/RED</text>
<text x="621.80" y="115.50" text-anchor="middle" fill="#4a6cb8" font-size="6.9">ENGINE CONTROL RELAY</text>
<text x="621.80" y="124.60" text-anchor="middle" fill="#333" font-size="6.9">(BELOW RIGHT SIDE OF DASH, AT KICK PANEL)</text>
<rect x="514.5" y="128.3" width="208.7" height="63.9" fill="#c8c8fa" stroke="#66668a" stroke-width="1"/>
<path d="M526.30,150.80 L526.30,191.60 M523.20,188.00 L526.30,191.60 L529.40,188.00" fill="none" stroke="#222" stroke-width="0.9"/>
<path d="M526.3,150.8 L549.7,150.8 L549.7,157.5" fill="none" stroke="#222" stroke-width="0.9"/>
<path d="M538.2,176.9 L549.7,157.5" fill="none" stroke="#222" stroke-width="0.9"/>
<path d="M540.0,173.9 L541.9,170.7" fill="none" stroke="#222" stroke-width="2.0"/>
<circle cx="549.7" cy="157.5" r="1.7" fill="#000"/><circle cx="538.2" cy="176.9" r="1.7" fill="#000"/>
<path d="M545.3,167.2 L669.8,167.2" fill="none" stroke="#4a4a6a" stroke-width="0.75" stroke-dasharray="9.6 4.1"/>
<path d="M560.90,176.90 L560.90,191.60 M557.80,188.00 L560.90,191.60 L564.00,188.00" fill="none" stroke="#222" stroke-width="0.9"/>
<circle cx="560.9" cy="176.9" r="1.7" fill="#000"/><circle cx="560.9" cy="183.5" r="1.7" fill="#000"/>
<path d="M560.9,183.5 L584.4,183.5" fill="none" stroke="#222" stroke-width="0.9"/>
<path d="M584.40,183.50 L584.40,191.60 M581.30,188.00 L584.40,191.60 L587.50,188.00" fill="none" stroke="#222" stroke-width="0.9"/>
<path d="M630.40,177.30 L630.40,191.60 M627.30,188.00 L630.40,191.60 L633.50,188.00" fill="none" stroke="#222" stroke-width="0.9"/>
<path d="M630.4,157.1 L630.4,139.5 L711.6,139.5 L711.6,169.6" fill="none" stroke="#222" stroke-width="0.9"/>
<path d="M711.60,174.40 L711.60,191.60 M708.50,188.00 L711.60,191.60 L714.70,188.00" fill="none" stroke="#222" stroke-width="0.9"/>
<polygon points="708.5,174.7 714.7,174.7 711.6,169.9" fill="#000"/>
<path d="M708.9,170.0 L714.3,170.0" fill="none" stroke="#222" stroke-width="0.9"/>
<path d="M630.4,157.1 Q624.60,159.60 629.6,162.15 Q624.60,164.65 629.6,167.20 Q624.60,169.70 629.6,172.25 Q624.60,174.75 629.6,177.30" fill="none" stroke="#222" stroke-width="0.9"/>
<path d="M641.80,177.30 L641.80,191.60 M638.70,188.00 L641.80,191.60 L644.90,188.00" fill="none" stroke="#222" stroke-width="0.9"/>
<path d="M641.8,157.1 Q648.20,159.60 642.20,162.15 Q648.20,164.65 642.20,167.20 Q648.20,169.70 642.20,172.25 Q648.20,174.75 642.20,177.30" fill="none" stroke="#222" stroke-width="0.9"/>
<path d="M641.8,157.1 L641.8,151.2 L688.5,151.2" fill="none" stroke="#222" stroke-width="0.9"/>
<path d="M688.50,151.20 L688.50,191.60 M685.40,188.00 L688.50,191.60 L691.60,188.00" fill="none" stroke="#222" stroke-width="0.9"/>
<circle cx="665.1" cy="151.2" r="1.7" fill="#000"/><circle cx="665.1" cy="157.5" r="1.7" fill="#000"/>
<path d="M665.1,157.5 L676.2,176.9" fill="none" stroke="#222" stroke-width="0.9"/>
<path d="M672.6,170.7 L674.4,173.8" fill="none" stroke="#222" stroke-width="2.0"/>
<circle cx="676.2" cy="176.9" r="1.1" fill="#778"/>
<path d="M653.50,176.80 L653.50,191.60 M650.40,188.00 L653.50,191.60 L656.60,188.00" fill="none" stroke="#222" stroke-width="0.9"/>
<circle cx="653.5" cy="176.6" r="0.9" fill="#556"/>
<path d="M522.30,195.00 A4.4,4.4 0 0 0 530.30,195.00" fill="none" stroke="#444" stroke-width="0.9"/>
<path d="M556.90,195.00 A4.4,4.4 0 0 0 564.90,195.00" fill="none" stroke="#444" stroke-width="0.9"/>
<path d="M580.20,195.00 A4.4,4.4 0 0 0 588.20,195.00" fill="none" stroke="#444" stroke-width="0.9"/>
<path d="M626.40,195.00 A4.4,4.4 0 0 0 634.40,195.00" fill="none" stroke="#444" stroke-width="0.9"/>
<path d="M637.80,195.00 A4.4,4.4 0 0 0 645.80,195.00" fill="none" stroke="#444" stroke-width="0.9"/>
<path d="M649.50,195.00 A4.4,4.4 0 0 0 657.50,195.00" fill="none" stroke="#444" stroke-width="0.9"/>
<path d="M684.40,195.00 A4.4,4.4 0 0 0 692.40,195.00" fill="none" stroke="#444" stroke-width="0.9"/>
<path d="M707.50,195.00 A4.4,4.4 0 0 0 715.50,195.00" fill="none" stroke="#444" stroke-width="0.9"/>
<text x="523.70" y="201.50" text-anchor="end" fill="#333" font-size="6.75" transform="rotate(-90 523.70 201.50)">BLK/YEL</text>
<text x="558.30" y="201.50" text-anchor="end" fill="#333" font-size="6.75" transform="rotate(-90 558.30 201.50)">RED</text>
<text x="581.60" y="201.50" text-anchor="end" fill="#333" font-size="6.75" transform="rotate(-90 581.60 201.50)">BLK/RED</text>
<text x="627.80" y="201.50" text-anchor="end" fill="#333" font-size="6.75" transform="rotate(-90 627.80 201.50)">BLK</text>
<text x="639.20" y="201.50" text-anchor="end" fill="#333" font-size="6.75" transform="rotate(-90 639.20 201.50)">BLK/BLU</text>
<text x="650.90" y="201.50" text-anchor="end" fill="#333" font-size="6.75" transform="rotate(-90 650.90 201.50)">BLK/BLU</text>
<text x="685.80" y="201.50" text-anchor="end" fill="#333" font-size="6.75" transform="rotate(-90 685.80 201.50)">BLK/WHT</text>
<text x="708.90" y="201.50" text-anchor="end" fill="#333" font-size="6.75" transform="rotate(-90 708.90 201.50)">BLK/WHT</text>
<rect x="808.4" y="96.6" width="37.0" height="24.0" fill="#c8c8fa" stroke="#55557a" stroke-width="1"/>
<circle cx="827.1" cy="123.3" r="6.9" fill="none" stroke="#444" stroke-width="0.9"/>
<circle cx="827.3" cy="109.8" r="6.4" fill="#d4d4fc" stroke="#333" stroke-width="0.9"/>
<text x="827.30" y="113.00" text-anchor="middle" fill="#223" font-size="9.4">M</text>
<rect x="817.3" y="106.4" width="3.6" height="7.0" fill="#d0d0fc" stroke="#333" stroke-width="0.8"/>
<rect x="833.7" y="106.4" width="3.4" height="7.0" fill="#d0d0fc" stroke="#333" stroke-width="0.8"/>
<path d="M817.3,108.4 L815.4,110.2 L815.4,120.3 M837.1,108.4 L838.5,110.2 L838.5,120.3" fill="none" stroke="#222" stroke-width="0.9"/>
<path d="M812.50,116.8 L815.40,120.4 L818.30,116.8" fill="none" stroke="#222" stroke-width="0.9"/>
<path d="M811.40,121.70 A4.4,4.4 0 0 0 819.40,121.70" fill="none" stroke="#444" stroke-width="0.9"/>
<path d="M835.60,116.8 L838.50,120.4 L841.40,116.8" fill="none" stroke="#222" stroke-width="0.9"/>
<path d="M834.50,121.70 A4.4,4.4 0 0 0 842.50,121.70" fill="none" stroke="#444" stroke-width="0.9"/>
<text x="848.80" y="101.90" text-anchor="start" fill="#4a6cb8" font-size="6.9">FUEL</text>
<text x="848.80" y="109.50" text-anchor="start" fill="#4a6cb8" font-size="6.9">PUMP</text>
<text x="848.80" y="118.90" text-anchor="start" fill="#333" font-size="6.9">(IN TOP</text>
<text x="848.80" y="126.50" text-anchor="start" fill="#333" font-size="6.9">SIDE OF</text>
<text x="848.80" y="134.10" text-anchor="start" fill="#333" font-size="6.9">FUEL</text>
<text x="848.80" y="141.70" text-anchor="start" fill="#333" font-size="6.9">TANK)</text>
<text x="812.80" y="143.00" text-anchor="middle" fill="#333" font-size="6.75" transform="rotate(-90 812.80 143.00)">BLK/BLU</text>
<text x="836.20" y="136.50" text-anchor="middle" fill="#333" font-size="6.75" transform="rotate(-90 836.20 136.50)">BLK</text>
<text x="836.20" y="180.50" text-anchor="middle" fill="#333" font-size="6.75" transform="rotate(-90 836.20 180.50)">BLK</text>
<text x="776.50" y="181.80" text-anchor="middle" fill="#333" font-size="6.9">BLK/BLU</text>
<path d="M753.9,199.4 A4.3,4.3 0 0 1 761.5,199.4" fill="none" stroke="#444" stroke-width="0.9"/>
<text x="757.00" y="207.50" text-anchor="middle" fill="#333" font-size="6.9">FUEL PUMP</text>
<text x="757.00" y="216.50" text-anchor="middle" fill="#333" font-size="6.9">CHECK</text>
<text x="757.00" y="224.80" text-anchor="middle" fill="#333" font-size="6.9">CONNECTOR</text>
<text x="757.00" y="233.80" text-anchor="middle" fill="#333" font-size="6.9">(RIGHT REAR</text>
<text x="757.00" y="242.10" text-anchor="middle" fill="#333" font-size="6.9">CORNER OF</text>
<text x="757.00" y="250.80" text-anchor="middle" fill="#333" font-size="6.9">ENGINE COMPT)</text>
<text x="839.00" y="211.60" text-anchor="middle" fill="#4a6cb8" font-size="6.9">G202</text>
<text x="839.00" y="220.00" text-anchor="middle" fill="#333" font-size="6.9">(LEFT SIDE</text>
<text x="839.00" y="228.50" text-anchor="middle" fill="#333" font-size="6.9">OF I/P)</text>
<text x="707.50" y="322.00" text-anchor="middle" fill="#333" font-size="6.75" transform="rotate(-90 707.50 322.00)">BLK/WHT</text>
<text x="730.00" y="611.00" text-anchor="middle" fill="#333" font-size="6.75" transform="rotate(-90 730.00 611.00)">BLK/WHT</text>
<text x="187.80" y="412.20" text-anchor="start" fill="#333" font-size="6.9">AIR CONDITIONING</text>
<text x="187.80" y="420.10" text-anchor="start" fill="#333" font-size="6.9">COMPRESSOR CLUTCH</text>
<text x="187.80" y="428.60" text-anchor="start" fill="#333" font-size="6.9">RELAY</text>
<text x="236.50" y="486.70" text-anchor="middle" fill="#4a6cb8" font-size="6.9">IGNITION TIMING</text>
<text x="236.50" y="495.22" text-anchor="middle" fill="#4a6cb8" font-size="6.9">ADJUSTMENT</text>
<text x="236.50" y="503.74" text-anchor="middle" fill="#4a6cb8" font-size="6.9">CONNECTOR</text>
<text x="236.50" y="512.26" text-anchor="middle" fill="#333" font-size="6.9">(RIGHT REAR</text>
<text x="236.50" y="520.78" text-anchor="middle" fill="#333" font-size="6.9">CORNER OF</text>
<text x="236.50" y="529.30" text-anchor="middle" fill="#333" font-size="6.9">ENGINE COMPT)</text>
<path d="M205.0,494.36 A3.9,3.9 0 0 0 205.0,501.56" fill="none" stroke="#444" stroke-width="0.9"/>
<text x="487.80" y="459.90" text-anchor="start" fill="#333" font-size="6.9">BLK</text>
<text x="627.80" y="488.00" text-anchor="middle" fill="#333" font-size="6.75" transform="rotate(-90 627.80 488.00)">BLK</text>
<text x="684.50" y="488.00" text-anchor="middle" fill="#333" font-size="6.75" transform="rotate(-90 684.50 488.00)">BLK</text>
<text x="630.30" y="523.70" text-anchor="middle" fill="#4a6cb8" font-size="6.9">G203</text>
<text x="630.30" y="532.10" text-anchor="middle" fill="#333" font-size="6.9">(RIGHT KICK</text>
<text x="630.30" y="540.60" text-anchor="middle" fill="#333" font-size="6.9">PANEL)</text>
<text x="688.30" y="523.70" text-anchor="middle" fill="#4a6cb8" font-size="6.9">G121</text>
<text x="688.30" y="532.10" text-anchor="middle" fill="#333" font-size="6.9">(CENTER OF</text>
<text x="688.30" y="540.60" text-anchor="middle" fill="#333" font-size="6.9">SAFETY WALL)</text>
<text x="545.60" y="587.60" text-anchor="start" fill="#333" font-size="6.9">BLK</text>
<text x="608.70" y="602.50" text-anchor="middle" fill="#4a6cb8" font-size="6.9">G106</text>
<text x="608.70" y="611.90" text-anchor="middle" fill="#333" font-size="6.9">(BEHIND LEFT</text>
<text x="608.70" y="619.60" text-anchor="middle" fill="#333" font-size="6.9">HEADLAMP)</text>
<text x="259.50" y="610.60" text-anchor="start" fill="#333" font-size="6.9">BLK</text>
<text x="259.50" y="621.90" text-anchor="start" fill="#333" font-size="6.9">YEL</text>
<text x="236.30" y="633.80" text-anchor="start" fill="#333" font-size="6.9">GRN/WHT</text>
<path d="M285.7,610.06 A3.9,3.9 0 0 0 285.7,617.26" fill="none" stroke="#444" stroke-width="0.9"/>
<path d="M285.7,621.63 A3.9,3.9 0 0 0 285.7,628.83" fill="none" stroke="#444" stroke-width="0.9"/>
<path d="M285.7,633.20 A3.9,3.9 0 0 0 285.7,640.40" fill="none" stroke="#444" stroke-width="0.9"/>
<text x="292.00" y="619.50" text-anchor="start" fill="#4a6cb8" font-size="6.9">DATA LINK</text>
<text x="292.00" y="627.60" text-anchor="start" fill="#4a6cb8" font-size="6.9">CONNECTOR</text>
<text x="292.00" y="636.00" text-anchor="start" fill="#333" font-size="6.9">(LEFT SIDE</text>
<text x="292.00" y="644.60" text-anchor="start" fill="#333" font-size="6.9">OF I/P)</text>
<text x="188.10" y="659.00" text-anchor="start" fill="#333" font-size="6.9">A/C ENGINE COOLANT</text>
<text x="188.10" y="667.70" text-anchor="start" fill="#333" font-size="6.9">TEMPERATURE SWITCH</text>
<text x="306.60" y="666.20" text-anchor="start" fill="#333" font-size="6.9">BLK/YEL</text>
<text x="349.10" y="658.70" text-anchor="start" fill="#333" font-size="6.9">M/T</text>
<text x="350.00" y="691.70" text-anchor="start" fill="#333" font-size="6.9">A/T</text>
<text x="377.70" y="644.80" text-anchor="start" fill="#333" font-size="6.9">BLK/YEL</text>
<text x="377.70" y="690.90" text-anchor="start" fill="#333" font-size="6.9">BLK/YEL</text>
<path d="M373.8,642.7 L371.3,645.6 L371.3,668.4 L368.3,671.5 L371.3,674.6 L371.3,697.2 L373.8,700.1" fill="none" stroke="#444" stroke-width="0.9"/>
<text x="479.30" y="692.60" text-anchor="start" fill="#4a6cb8" font-size="6.9">STARTING SYSTEM</text>
<text x="479.30" y="701.60" text-anchor="start" fill="#333" font-size="6.9">(STARTER RELAY)</text>
</g>
<rect x="52.0" y="81.7" width="838.5" height="720" fill="none" stroke="#0c0c0c" stroke-width="1.6"/>
<rect x="0" y="775.8" width="922" height="22" fill="#fff"/>
</svg>
</body></html>
